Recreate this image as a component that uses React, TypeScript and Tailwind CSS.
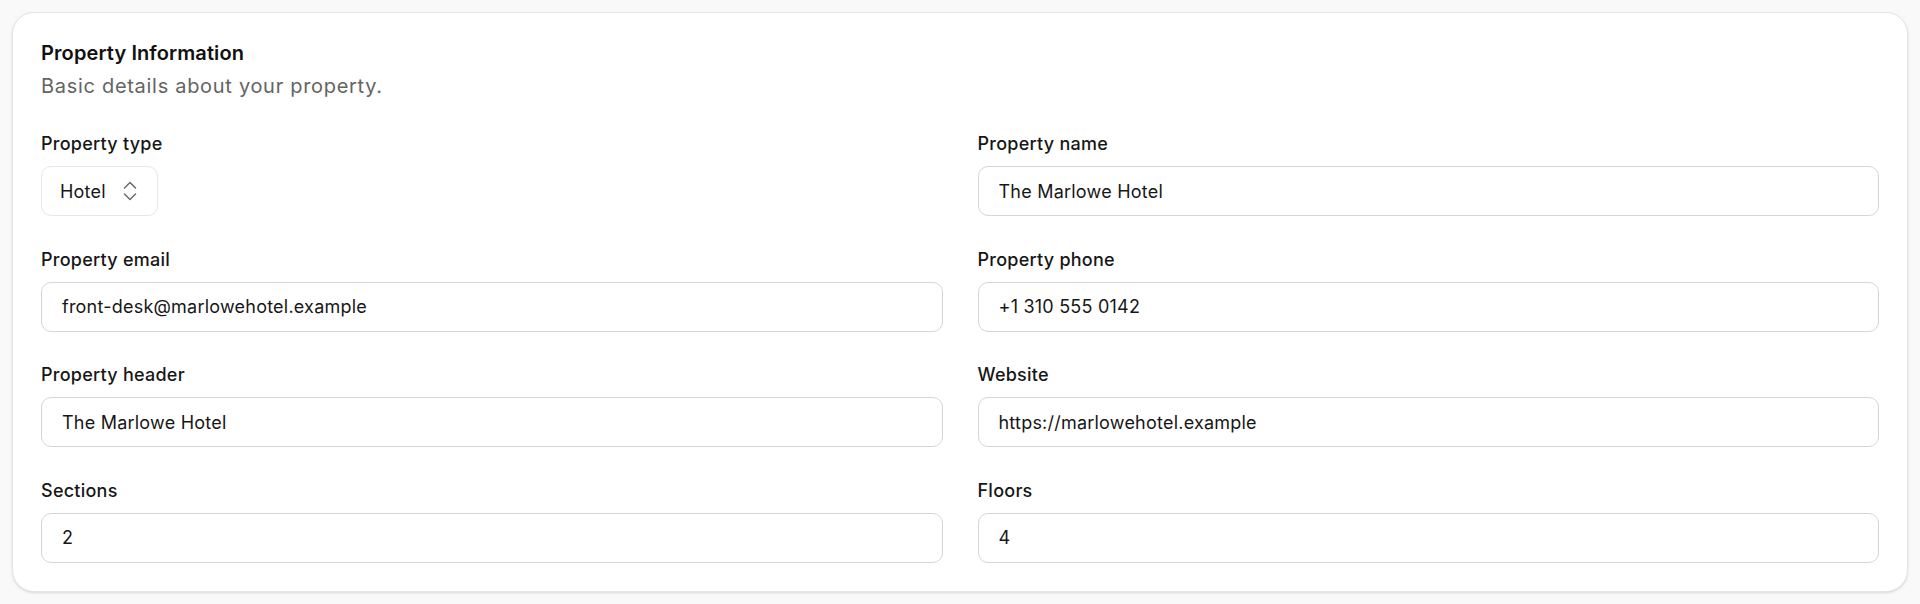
import { useState } from 'react';

interface Field {
  label: string;
  value: string;
}

const FIELDS: Field[] = [
  { label: 'Property email', value: 'front-desk@marlowehotel.example' },
  { label: 'Property phone', value: '+1 310 555 0142' },
  { label: 'Property header', value: 'The Marlowe Hotel' },
  { label: 'Website', value: 'https://marlowehotel.example' },
  { label: 'Sections', value: '2' },
  { label: 'Floors', value: '4' },
];

function UpDown() {
  return (
    <svg width="14" height="20" viewBox="0 0 14 20" fill="none" stroke="#6b6b6b" strokeWidth="1.5" strokeLinecap="round" strokeLinejoin="round">
      <path d="M1.5 7 L7 1.5 L12.5 7" />
      <path d="M1.5 13 L7 18.5 L12.5 13" />
    </svg>
  );
}

function TextField({ label, value }: Field) {
  const [val, setVal] = useState(value);
  return (
    <div className="flex flex-col">
      <label className="text-[18px] leading-[27px] font-medium tracking-[0.25px] text-[#171717] mb-[9px]">{label}</label>
      <input
        value={val}
        onChange={(e) => setVal(e.target.value)}
        className="h-[50px] w-full rounded-[10px] border border-[#d6d6d6] bg-white px-[20px] text-[18px] tracking-[0.22px] text-[#171717] outline-none"
      />
    </div>
  );
}

export default function App() {
  const [name, setName] = useState('The Marlowe Hotel');

  return (
    <div className="min-h-[604px] bg-[#f9f9f9] p-[12px] font-['Inter',sans-serif]">
      <section className="rounded-[22px] border border-[#e6e6e6] bg-white p-[28px] shadow-sm">
        <h2 className="text-[20px] leading-[24px] font-semibold tracking-[0.1px] text-[#111]">Property Information</h2>
        <p className="mt-[7px] text-[20px] leading-[28px] text-[#646464] tracking-[0.7px]">Basic details about your property.</p>

        <div className="mt-[30px] grid grid-cols-2 gap-x-[35px] gap-y-[29.5px]">
          {/* Property type */}
          <div className="flex flex-col">
            <label className="text-[18px] leading-[27px] font-medium tracking-[0.25px] text-[#171717] mb-[9px]">Property type</label>
            <button className="flex h-[50px] w-fit items-center gap-[17px] rounded-[10px] border border-[#e6e6e6] bg-white pl-[18px] pr-[20px] text-[18px] tracking-[0.22px] text-[#171717]">
              Hotel
              <UpDown />
            </button>
          </div>

          {/* Property name */}
          <div className="flex flex-col">
            <label className="text-[18px] leading-[27px] font-medium tracking-[0.25px] text-[#171717] mb-[9px]">Property name</label>
            <input
              value={name}
              onChange={(e) => setName(e.target.value)}
              className="h-[50px] w-full rounded-[10px] border border-[#d6d6d6] bg-white px-[20px] text-[18px] tracking-[0.22px] text-[#171717] outline-none"
            />
          </div>

          {FIELDS.map((f) => (
            <TextField key={f.label} label={f.label} value={f.value} />
          ))}
        </div>
      </section>
    </div>
  );
}
